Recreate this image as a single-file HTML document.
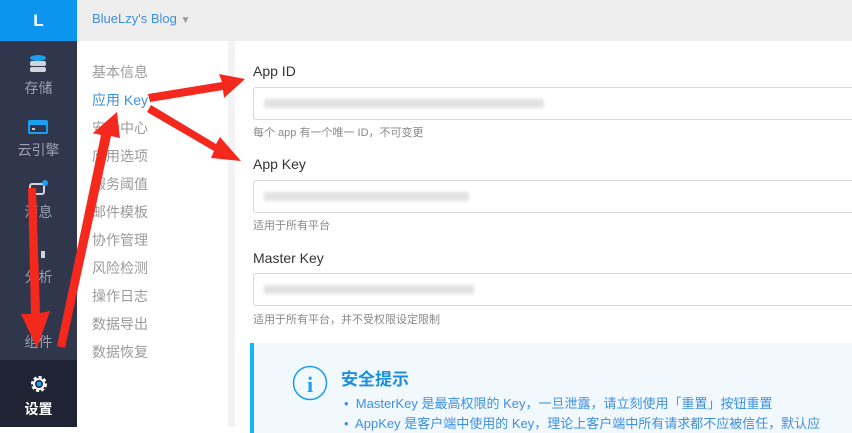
<!DOCTYPE html><html><head><meta charset="utf-8"><style>
*{margin:0;padding:0;box-sizing:border-box}
body{width:852px;height:427px;overflow:hidden;position:relative;font-family:"Liberation Sans","Noto Sans CJK SC",sans-serif;background:#fff}
.sb{position:absolute;left:0;top:0;width:77px;height:427px;background:#30374d}
.logo{height:41px;background:#0b95ee;color:#fff;font-weight:bold;font-size:17px;text-align:center;line-height:41px}
.it{position:absolute;left:0;width:77px;text-align:center;color:#9aa0b2;font-size:14px}
.set{position:absolute;left:0;top:360px;width:77px;height:67px;background:#1f2333;color:#fff;text-align:center;font-size:14px;font-weight:bold}
.hd{position:absolute;left:77px;top:0;right:0;height:41px;background:#eeeeee;color:#3d8fe0;font-size:13px;line-height:38px;padding-left:15px}
.sub{position:absolute;left:77px;top:41px;width:151px;bottom:0;background:#fff}
.sub div{position:absolute;left:15px;font-size:14px;color:#9a9a9a}
.strip{position:absolute;left:228px;top:41px;width:7px;bottom:0;background:#f3f3f3}
.lb{position:absolute;left:253px;font-size:14px;color:#333}
.in{position:absolute;left:253px;width:620px;height:33px;border:1px solid #d8d8d8;border-radius:3px;background:#fff}
.bl{position:absolute;top:11px;height:9px;background:#e2e2e2;filter:blur(1.5px)}
.hint{position:absolute;left:253px;font-size:11px;color:#888}
.info{position:absolute;left:250px;top:343px;width:620px;height:90px;background:#f2f9fe;border-left:4px solid #14b6f5}
</style></head><body>
<div class="sb"><div class="logo">L</div>
<svg style="position:absolute;left:29px;top:55px" width="18" height="18"><ellipse cx="9" cy="3" rx="8" ry="3" fill="#1aa0f0"/><rect x="1" y="6" width="16" height="5" rx="2" fill="#d0d4dc"/><rect x="1" y="12" width="16" height="5" rx="2" fill="#d0d4dc"/></svg>
<div class="it" style="top:78px">存储</div>
<svg style="position:absolute;left:28px;top:120px" width="20" height="14"><rect x="1" y="1" width="18" height="12" rx="1" fill="none" stroke="#1aa0f0" stroke-width="2"/><rect x="1" y="1" width="18" height="4" fill="#1aa0f0"/><rect x="4" y="8" width="3" height="2" fill="#ccc"/></svg>
<div class="it" style="top:140px">云引擎</div>
<svg style="position:absolute;left:28px;top:180px" width="20" height="16"><rect x="2" y="4" width="14" height="10" rx="2" fill="none" stroke="#d0d4dc" stroke-width="2"/><circle cx="17" cy="3" r="3" fill="#1aa0f0"/></svg>
<div class="it" style="top:202px">消息</div>
<svg style="position:absolute;left:28px;top:244px" width="20" height="16"><rect x="2" y="2" width="4" height="12" fill="#1aa0f0"/><rect x="13" y="7" width="4" height="7" fill="#d0d4dc"/></svg>
<div class="it" style="top:267px">分析</div>
<div class="it" style="top:332px">组件</div>
<div class="set"><svg style="margin-top:14px" width="20" height="20" viewBox="0 0 20 20"><circle cx="10" cy="10" r="6.5" fill="none" stroke="#fff" stroke-width="3" stroke-dasharray="3 2"/><circle cx="10" cy="10" r="5" fill="none" stroke="#fff" stroke-width="2"/><circle cx="10" cy="10" r="2.5" fill="#1aa0f0"/></svg><div style="margin-top:2px">设置</div></div>
</div>
<div class="hd">BlueLzy's Blog <span style="color:#999;font-size:10px">▼</span></div>
<div class="sub">
<div style="top:21px">基本信息</div><div style="top:49px;color:#3d8fe0">应用 Key</div><div style="top:77px">安全中心</div><div style="top:105px">应用选项</div><div style="top:133px">服务阈值</div><div style="top:161px">邮件模板</div><div style="top:189px">协作管理</div><div style="top:217px">风险检测</div><div style="top:245px">操作日志</div><div style="top:273px">数据导出</div><div style="top:301px">数据恢复</div>
</div>
<div class="strip"></div>
<div class="lb" style="top:63px">App ID</div>
<div class="in" style="top:87px"><div class="bl" style="left:10px;width:280px"></div></div>
<div class="hint" style="top:124px">每个 app 有一个唯一 ID，不可变更</div>
<div class="lb" style="top:156px">App Key</div>
<div class="in" style="top:180px"><div class="bl" style="left:10px;width:205px"></div></div>
<div class="hint" style="top:217px">适用于所有平台</div>
<div class="lb" style="top:250px">Master Key</div>
<div class="in" style="top:273px"><div class="bl" style="left:10px;width:210px"></div></div>
<div class="hint" style="top:311px">适用于所有平台，并不受权限设定限制</div>
<div class="info">
<svg style="position:absolute;left:38px;top:22px" width="36" height="36"><circle cx="18" cy="18" r="16.5" fill="none" stroke="#1a9ef0" stroke-width="1.5"/><text x="18" y="27" text-anchor="middle" font-family="Liberation Serif" font-weight="bold" font-size="22" fill="#1a9ef0">i</text></svg>
<div style="position:absolute;left:87px;top:22px;font-size:17px;color:#1a8fe0;font-weight:bold">安全提示</div>
<div style="position:absolute;left:90px;top:50px;font-size:13px;color:#3d8fe0;white-space:nowrap">•&nbsp; MasterKey 是最高权限的 Key，一旦泄露，请立刻使用「重置」按钮重置</div>
<div style="position:absolute;left:90px;top:70px;font-size:13px;color:#3d8fe0;white-space:nowrap">•&nbsp; AppKey 是客户端中使用的 Key，理论上客户端中所有请求都不应被信任，默认应</div>
</div>
<svg style="position:absolute;left:0;top:0" width="852" height="427">
<g fill="#f5281e">
<polygon points="148,94 222,82 219,74 245,79 224,98 223,90 150,102"/>
<polygon points="151,105 216,144 220,137 241,161 211,158 214,151 147,112"/>
<polygon points="57,346 101,135 93,133 117,112 120,138 111,136 65,348"/>
<polygon points="28,188 36,188 40,313 50,311 37,348 21,314 31,314"/>
</g></svg>
</body></html>
